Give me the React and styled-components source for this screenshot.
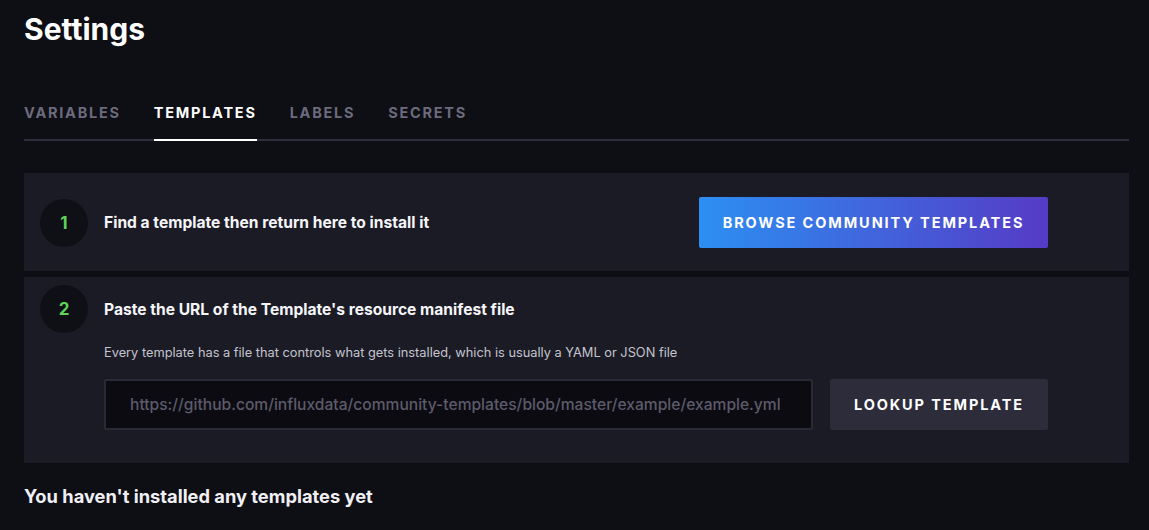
import React from 'react'
import styled, { createGlobalStyle } from 'styled-components'

const GlobalStyle = createGlobalStyle`
  html, body {
    margin: 0;
    padding: 0;
    background: #0e0e15;
  }
  body {
    font-family: Inter, "Open Sans", sans-serif;
    color: #f5f5f8;
  }
`

const Page = styled.div`
  padding: 0 20px 0 24px;
  width: 1105px;
  height: 530px;
  overflow: hidden;
`

const Title = styled.h1`
  margin: 0;
  padding-top: 11px;
  font-size: 30px;
  font-weight: 700;
  line-height: 36px;
  color: #ffffff;
`

const Tabs = styled.div`
  display: flex;
  gap: 33px;
  margin-top: 56px;
  border-bottom: 2px solid #2f2e3d;
`

const Tab = styled.div`
  font-size: 14.5px;
  font-weight: 700;
  letter-spacing: 1.75px;
  text-transform: uppercase;
  color: ${p => (p.active ? '#ffffff' : '#6c6b7d')};
  padding: 1px 0 18px;
  margin-bottom: -2px;
  border-bottom: 2px solid ${p => (p.active ? '#ffffff' : 'transparent')};
`

const Steps = styled.div`
  display: flex;
  flex-direction: column;
  gap: 6px;
  margin-top: 32px;
`

const Panel = styled.div`
  background: #1b1b25;
  padding: ${p => p.pad || '24px 81px 23px 16px'};
`

const Row = styled.div`
  display: flex;
  align-items: center;
  gap: 16px;
`

const Circle = styled.div`
  width: 48px;
  height: 48px;
  flex: none;
  border-radius: 50%;
  background: #0f0f16;
  color: #5fd35a;
  font-size: 17px;
  font-weight: 700;
  display: flex;
  align-items: center;
  justify-content: center;
`

const StepText = styled.div`
  flex: 1;
  font-size: 15.6px;
  font-weight: 700;
  color: #f5f5f8;
`

const Body = styled.div`
  padding-left: 64px;
`

const Description = styled.p`
  margin: 12px 0 19px;
  font-size: 12.8px;
  font-weight: 400;
  color: #c4c4cf;
`

const InputRow = styled.div`
  display: flex;
  gap: 17px;
`

const UrlInput = styled.input`
  flex: 1;
  height: 51px;
  box-sizing: border-box;
  background: #0c0b11;
  border: 2px solid #2a2a37;
  border-radius: 2px;
  padding: 0 24px;
  font-family: inherit;
  font-size: 15.6px;
  font-weight: 500;
  color: #f5f5f8;
  outline: none;
  &::placeholder {
    color: #5c5b6b;
  }
`

const Button = styled.button`
  flex: none;
  width: ${p => p.width}px;
  height: 51px;
  border: none;
  border-radius: 2px;
  background: ${p => (p.primary ? 'linear-gradient(90deg, #2c8ff2, #553bc6)' : '#2d2c3b')};
  color: #ffffff;
  font-family: inherit;
  font-size: 14.5px;
  font-weight: 700;
  letter-spacing: 1.9px;
  text-transform: uppercase;
  cursor: pointer;
`

const Empty = styled.div`
  margin-top: 22px;
  font-size: 18.3px;
  font-weight: 700;
  color: #f0f0f4;
`

const tabs = ['Variables', 'Templates', 'Labels', 'Secrets']

export default function App() {
  return (
    <Page>
      <GlobalStyle />
      <Title>Settings</Title>
      <Tabs>
        {tabs.map(t => (
          <Tab key={t} active={t === 'Templates'}>{t}</Tab>
        ))}
      </Tabs>
      <Steps>
        <Panel>
          <Row>
            <Circle>1</Circle>
            <StepText>Find a template then return here to install it</StepText>
            <Button primary width={349}>Browse Community Templates</Button>
          </Row>
        </Panel>
        <Panel pad="8px 81px 33px 16px">
          <Row>
            <Circle>2</Circle>
            <StepText>Paste the URL of the Template's resource manifest file</StepText>
          </Row>
          <Body>
            <Description>
              Every template has a file that controls what gets installed, which is usually a YAML or JSON file
            </Description>
            <InputRow>
              <UrlInput placeholder="https://github.com/influxdata/community-templates/blob/master/example/example.yml" />
              <Button width={218}>Lookup Template</Button>
            </InputRow>
          </Body>
        </Panel>
      </Steps>
      <Empty>You haven't installed any templates yet</Empty>
    </Page>
  )
}
